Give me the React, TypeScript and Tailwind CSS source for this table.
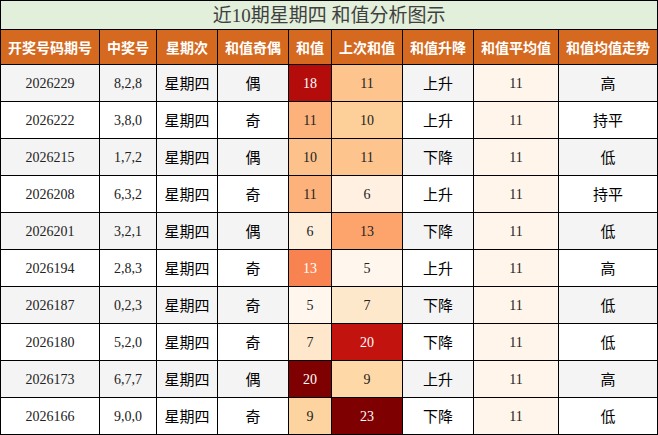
import React from "react";

type Row = {
  id: string;
  nums: string;
  oe: string;
  sum: number;
  sumCls: string;
  prev: number;
  prevCls: string;
  trend: string;
  avg: number;
  level: string;
};

const rows: Row[] = [
  { id: "2026229", nums: "8,2,8", oe: "偶", sum: 18, sumCls: "bg-[#b40b0b] text-white", prev: 11, prevCls: "bg-[#fdc48d]", trend: "上升", avg: 11, level: "高" },
  { id: "2026222", nums: "3,8,0", oe: "奇", sum: 11, sumCls: "bg-[#fdb27b]", prev: 10, prevCls: "bg-[#fdcf99]", trend: "上升", avg: 11, level: "持平" },
  { id: "2026215", nums: "1,7,2", oe: "偶", sum: 10, sumCls: "bg-[#fdc28c]", prev: 11, prevCls: "bg-[#fdc48d]", trend: "下降", avg: 11, level: "低" },
  { id: "2026208", nums: "6,3,2", oe: "奇", sum: 11, sumCls: "bg-[#fdb27b]", prev: 6, prevCls: "bg-[#fff0e1]", trend: "上升", avg: 11, level: "持平" },
  { id: "2026201", nums: "3,2,1", oe: "偶", sum: 6, sumCls: "bg-[#feeedc]", prev: 13, prevCls: "bg-[#fda46d]", trend: "下降", avg: 11, level: "低" },
  { id: "2026194", nums: "2,8,3", oe: "奇", sum: 13, sumCls: "bg-[#f98350] text-white", prev: 5, prevCls: "bg-[#fff7ee]", trend: "上升", avg: 11, level: "高" },
  { id: "2026187", nums: "0,2,3", oe: "奇", sum: 5, sumCls: "bg-[#fff7ee]", prev: 7, prevCls: "bg-[#fee8cb]", trend: "下降", avg: 11, level: "低" },
  { id: "2026180", nums: "5,2,0", oe: "奇", sum: 7, sumCls: "bg-[#fee7ca]", prev: 20, prevCls: "bg-[#c3130f] text-white", trend: "下降", avg: 11, level: "低" },
  { id: "2026173", nums: "6,7,7", oe: "偶", sum: 20, sumCls: "bg-[#7f0000] text-white", prev: 9, prevCls: "bg-[#fed9a7]", trend: "上升", avg: 11, level: "高" },
  { id: "2026166", nums: "9,0,0", oe: "奇", sum: 9, sumCls: "bg-[#fdd3a0]", prev: 23, prevCls: "bg-[#7f0000] text-white", trend: "下降", avg: 11, level: "低" },
];

const headers = ["开奖号码期号", "中奖号", "星期次", "和值奇偶", "和值", "上次和值", "和值升降", "和值平均值", "和值均值走势"];
const colCls = ["w-[99px]", "w-[57px]", "w-[61px]", "w-[71px]", "w-[43px]", "w-[71px]", "w-[71px]", "w-[85px]", "w-[99px]"];

const cell = "border border-black text-center p-0";
const cjk = "font-['Noto_Sans_CJK_SC',sans-serif] text-[15px] text-black";

export default function App() {
  return (
    <div className="w-[658px] h-[435px] bg-white">
      <table className="w-[658px] border-collapse table-fixed border border-black font-['Liberation_Serif','Noto_Sans_CJK_SC',serif]">
        <colgroup>
          {colCls.map((c, i) => (
            <col key={i} className={c} />
          ))}
        </colgroup>
        <tbody>
          <tr className="h-[29px]">
            <td colSpan={9} className={`${cell} bg-[#e2efda] text-[19px] text-[#404040] leading-none`}>
              近10期星期四 和值分析图示
            </td>
          </tr>
          <tr className="h-[35px]">
            {headers.map((h) => (
              <td key={h} className={`${cell} bg-[#d4691f] text-white font-bold text-[14px] whitespace-nowrap font-['Noto_Sans_CJK_SC',sans-serif]`}>
                {h}
              </td>
            ))}
          </tr>
          {rows.map((r, i) => {
            const base = i % 2 === 0 ? "bg-[#f4f4f4]" : "bg-white";
            return (
              <tr key={r.id} className="h-[37px] text-[14px] text-[#222]">
                <td className={`${cell} ${base}`}>{r.id}</td>
                <td className={`${cell} ${base}`}>{r.nums}</td>
                <td className={`${cell} ${cjk} ${base}`}>星期四</td>
                <td className={`${cell} ${cjk} ${base}`}>{r.oe}</td>
                <td className={`${cell} ${r.sumCls}`}>{r.sum}</td>
                <td className={`${cell} ${r.prevCls}`}>{r.prev}</td>
                <td className={`${cell} ${cjk} ${base}`}>{r.trend}</td>
                <td className={`${cell} bg-[#fff5ea]`}>{r.avg}</td>
                <td className={`${cell} ${cjk} ${base}`}>{r.level}</td>
              </tr>
            );
          })}
        </tbody>
      </table>
    </div>
  );
}
